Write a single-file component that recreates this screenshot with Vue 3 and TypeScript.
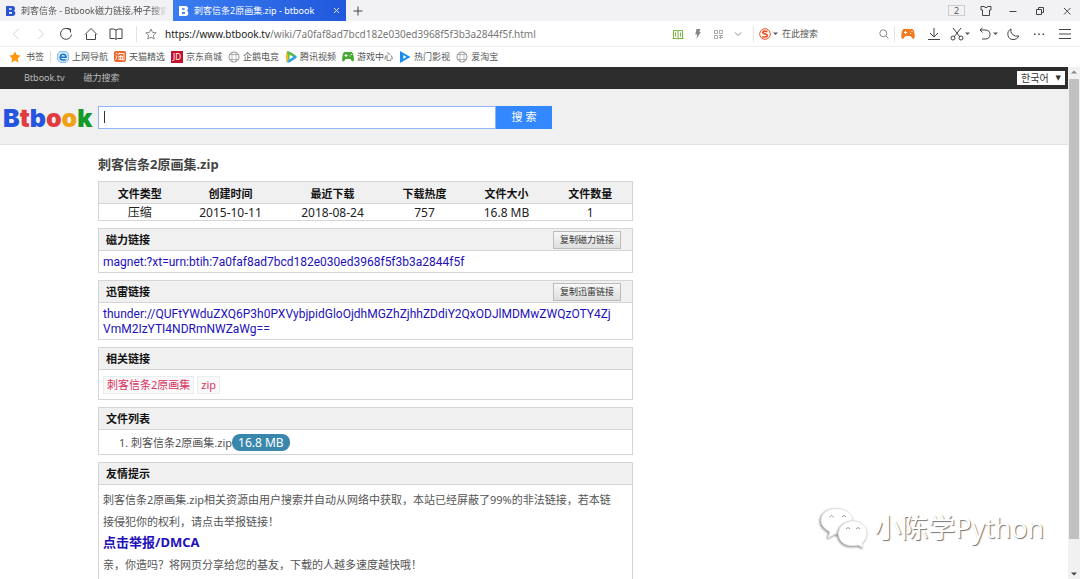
<script setup lang="ts">
import { ref } from 'vue'

interface Bookmark { label: string; icon: string }
interface Column { title: string; value: string; cls: string }

const bookmarks: Bookmark[] = [
  { label: '上网导航', icon: 'browser' },
  { label: '天猫精选', icon: 'tao' },
  { label: '京东商城', icon: 'jd' },
  { label: '企鹅电竞', icon: 'globe' },
  { label: '腾讯视频', icon: 'video' },
  { label: '游戏中心', icon: 'game' },
  { label: '热门影视', icon: 'play' },
  { label: '爱淘宝', icon: 'globe' },
]

const columns: Column[] = [
  { title: '文件类型', value: '压缩', cls: 'c82' },
  { title: '创建时间', value: '2015-10-11', cls: 'c100' },
  { title: '最近下载', value: '2018-08-24', cls: 'c104' },
  { title: '下载热度', value: '757', cls: 'c80' },
  { title: '文件大小', value: '16.8 MB', cls: 'c84' },
  { title: '文件数量', value: '1', cls: 'c84' },
]

const query = ref('')
const webQuery = ref('')
const magnet = 'magnet:?xt=urn:btih:7a0faf8ad7bcd182e030ed3968f5f3b3a2844f5f'
const thunder = 'thunder://QUFtYWduZXQ6P3h0PXVybjpidGloOjdhMGZhZjhhZDdiY2QxODJlMDMwZWQzOTY4ZjVmM2IzYTI4NDRmNWZaWg=='
</script>

<template>
  <div class="browser">
    <header class="tabs">
      <button class="tab first">
        <svg class="i10" viewBox="0 0 10 10"><path fill="#2b55d4" fill-rule="evenodd" d="M0 0h6.5c3 0 3.2 3.8 1.2 4.8C10.500 6 9.500 10 6.500 10H0zM3 2.200v1.600h2.600v-1.600zM3 6v1.800h3V6z" /></svg>
        <span class="tab-text fade">刺客信条 - Btbook磁力链接,种子搜索</span>
      </button>
      <button class="tab active">
        <svg class="i10" viewBox="0 0 10 10"><path fill="#fff" fill-rule="evenodd" d="M0 0h6.500c3 0 3.200 3.800 1.200 4.800C10.500 6 9.500 10 6.500 10H0zM3 2.200v1.600h2.600v-1.600zM3 6v1.800h3V6z" /></svg>
        <span class="tab-text">刺客信条2原画集.zip - btbook</span>
        <svg class="i7 line white" viewBox="0 0 7 7"><path d="M1 1l5 5M6 1L1 6" /></svg>
      </button>
      <button class="new-tab" aria-label="New tab"><svg class="i10 line dark" viewBox="0 0 10 10"><path d="M5 .5v9M.5 5h9" /></svg></button>
      <div class="window-tools">
        <span class="count">2</span>
        <svg class="i12 line dark" viewBox="0 0 12 12"><path d="M1 1.500h3Q6 4 8 1.500h3V5H9.500v5.500h-7V5H1z" /></svg>
        <svg class="i12 line dark" viewBox="0 0 12 12"><path d="M2.500 6.500h7" /></svg>
        <svg class="i12 line dark" viewBox="0 0 12 12"><path d="M2.500 4.500h5v5h-5zM4.500 4.500v-2h5v5h-2" /></svg>
        <svg class="i12 line dark" viewBox="0 0 12 12"><path d="M3 3l6.500 6.500M9.500 3L3 9.500" /></svg>
      </div>
    </header>

    <div class="address">
      <nav class="nav-tools">
        <svg class="i16 line pale" viewBox="0 0 16 16"><path d="M10.500 3L5.500 8l5 5" /></svg>
        <svg class="i16 line pale" viewBox="0 0 16 16"><path d="M5.500 3l5 5-5 5" /></svg>
        <svg class="i16 line dark" viewBox="0 0 16 16"><path d="M12 4A5.500 5.500 0 1 0 13.500 8.500M9 2.500L12.500 3v3.500" /></svg>
        <svg class="i16 line dark" viewBox="0 0 16 16"><path d="M2 8.500L8 2.500l6 6M3.500 8v5.500h9V8" /></svg>
        <svg class="i16 line dark" viewBox="0 0 16 16"><path d="M8 4Q6 2.500 2 3v9.500h4.500L8 13.500l1.500-1H14V3Q10 2.500 8 4zV13" /></svg>
      </nav>
      <div class="url">
        <svg class="i12 line grey" viewBox="0 0 12 12"><path d="M6 1l1.500 3.400 3.700.4-2.800 2.500.8 3.700L6 9.200 2.800 11l.8-3.700L.8 4.800l3.700-.4z" /></svg>
        <span class="url-text"><b>https://www.btbook.tv</b>/wiki/7a0faf8ad7bcd182e030ed3968f5f3b3a2844f5f.html</span>
      </div>
      <div class="url-tools">
        <svg class="i12 line green" viewBox="0 0 12 12"><path d="M6 2.500v8.500M.5 10.500h4.500l1 .5 1-.5h4.500M1.500 10.500v-8H5l1 .6 1-.6h3.500v8M3.500 4.500v4M8.500 4.500v4" /></svg>
        <svg class="i12" viewBox="0 0 12 12"><path fill="#888" d="M4.500 1H8.500L7.300 4h1.500L4.500 11l.7-4.500H3.200z" /></svg>
        <svg class="i12" viewBox="0 0 12 12"><path fill="none" stroke="#aaa" d="M2.500 2.500h3v3h-3zM7.500 2.500h3v3h-3zM2.500 7.500h3v3h-3zM7 7.500h4M7 9.500h4M8.500 7v4" /></svg>
        <svg class="i12 line grey" viewBox="0 0 12 12"><path d="M3 4.500l3 3 3-3" /></svg>
      </div>
      <form class="web-search" @submit.prevent>
        <svg class="i12" viewBox="0 0 12 12"><circle cx="6" cy="6" r="5.300" fill="none" stroke="#f05022" /><path fill="none" stroke="#f05022" stroke-width="1.700" d="M8.500 3.600Q4 2.300 3.800 4.500c0 1.800 4.500.8 4.500 2.900S5 9.200 3.300 8.400" /></svg>
        <svg class="i5" viewBox="0 0 5 5"><path fill="#555" d="M0 1.500h5L2.500 4z" /></svg>
        <input v-model="webQuery" aria-label="在此搜索" placeholder="在此搜索" />
        <svg class="i10 line grey" viewBox="0 0 10 10"><circle cx="4.300" cy="4.300" r="3.500" /><path d="M7 7l2.500 2.500" /></svg>
      </form>
      <div class="menu-tools">
        <svg class="i14" viewBox="0 0 14 14"><path fill="#f47a20" d="M3 2h8q2 0 2.500 4.500.7 5.500-1 5.500-1 0-3-3h-5q-2 3-3 3-1.700 0-1-5.500Q1 2 3 2z" /><path stroke="#fff" d="M3 5.500h3M4.500 4v3M9 6.500h1M10.500 4.500h1" /></svg>
        <svg class="i14 line dark" viewBox="0 0 14 14"><path d="M7 1v8.500M3 6l4 4 4-4M1 12.500h12" /></svg>
        <span class="pair cut">
          <svg class="i14 line dark" viewBox="0 0 14 14"><path d="M3 1l7 9M11 1L4 10" /><circle cx="3" cy="11" r="2" /><circle cx="11" cy="11" r="2" /></svg>
          <svg class="i5" viewBox="0 0 5 5"><path fill="#555" d="M0 1.500h5L2.500 4z" /></svg>
        </span>
        <span class="pair">
          <svg class="i14 line dark" viewBox="0 0 14 14"><path d="M4.500 1L2 3l2.500 2.500M2 3h5q5 0 5 4.500T7 12H4" /></svg>
          <svg class="i5" viewBox="0 0 5 5"><path fill="#555" d="M0 1.500h5L2.500 4z" /></svg>
        </span>
        <svg class="i14 line dark" viewBox="0 0 14 14"><path d="M5 2Q1 4 2 8.500t6 4q3 0 5-3.500-4 1-6.500-1.500T5 2z" /></svg>
        <svg class="i14" viewBox="0 0 14 14"><path fill="#444" d="M2 6.500h1.500V8H2zM6.300 6.500h1.500V8H6.300zM10.500 6.500H12V8h-1.500z" /></svg>
        <svg class="i14 line dark" viewBox="0 0 14 14"><path d="M1 2.500h12M1 7h12M1 11.500h12" /></svg>
      </div>
    </div>

    <nav class="bookmarks">
      <a href="#" class="bookmark star">
        <svg class="i12" viewBox="0 0 12 12"><path fill="#ff970f" d="M6 .3l1.800 3.800 4 .5-3 2.900.8 4.200L6 9.600l-3.600 2.100.8-4.200-3-2.900 4-.5z" /></svg>
        <span>书签</span>
      </a>
      <a v-for="b in bookmarks" :key="b.label" href="#" class="bookmark">
        <svg class="i12" viewBox="0 0 12 12">
          <g v-if="b.icon === 'browser'" fill="none">
            <path fill="#dff0fb" stroke="#6fb2e2" d="M2.500.7h7L11.300 3v6L9 11.300H3L.7 9V3z" />
            <path stroke="#1673c8" stroke-width="1.500" d="M3 6.200h6Q9 3.200 6.200 3.200T3.200 6.200 6.200 9 8.700 8.200" />
          </g>
          <g v-else-if="b.icon === 'tao'">
            <rect width="12" height="11" rx="2" fill="#ee6630" />
            <path fill="none" stroke="#fff" stroke-width=".9" d="M2 2l1.500 1M1.500 4.500L3 5.500 1.500 9M5.500 1.500L4.500 4M5 2.500h5v6.500H8.500M4.500 5.500h4.500M6.700 4v4.500M5 6.500v2h3.500v-2" />
          </g>
          <g v-else-if="b.icon === 'jd'">
            <rect width="12" height="12" fill="#c4122c" />
            <text class="jd" x="6" y="9" text-anchor="middle">JD</text>
          </g>
          <g v-else-if="b.icon === 'globe'" fill="none" stroke="#777" stroke-width=".8">
            <circle cx="6" cy="6" r="5" />
            <path d="M4 1.500v9M8 1.500v9M1.300 3.500h9.400M1.300 8.500h9.400" stroke-width=".5" />
          </g>
          <g v-else-if="b.icon === 'video'">
            <path fill="#2ba5e8" d="M2 .5Q4 0 6 1.500l5 3.300q1.500 1.200 0 2.400L4.500 11.500Q2 12 1.500 10z" />
            <path fill="#f6b824" d="M1.500 1Q.3 6 1.500 11l2-1.500V2z" />
            <path fill="#62be3c" d="M2 .5Q4 0 6 1.500l4 2.700-6 4z" />
            <path fill="#fff" d="M4.500 3.700L8.300 6 4.500 8.300z" />
          </g>
          <g v-else-if="b.icon === 'game'">
            <path fill="#45a932" d="M3 1h6q2 0 2.500 4 1 5.500-.5 5.500T8.500 8h-5Q2.500 10.500 1 10.500T.5 5Q1 1 3 1z" />
            <path stroke="#fff" d="M2.500 4.500h3M4 3v3M7.500 5h1M9 3.500h1" />
          </g>
          <g v-else>
            <path fill="#188df0" d="M1 0l10.500 6L1 12z" />
            <path fill="#fff" d="M4.300 4L7.500 6 4.300 8z" />
          </g>
        </svg>
        <span>{{ b.label }}</span>
      </a>
    </nav>

    <div class="viewport">
      <main class="page">
        <nav class="topbar">
          <a href="#">Btbook.tv</a>
          <a href="#">磁力搜索</a>
          <label class="lang">
            <select aria-label="Language"><option>한국어</option></select>
            <span class="arrow">▼</span>
          </label>
        </nav>
        <form class="search" @submit.prevent>
          <a href="#" class="logo"><span class="blue">B</span><span class="red">t</span><span class="blue">b</span><span class="red">o</span><span class="gold">o</span><span class="leaf">k</span></a>
          <input v-model="query" aria-label="搜索" />
          <button>搜 索</button>
        </form>

        <article class="content">
          <h1>刺客信条2原画集.zip</h1>
          <table>
            <thead><tr><th v-for="c in columns" :key="c.title" :class="c.cls">{{ c.title }}</th></tr></thead>
            <tbody><tr><td v-for="c in columns" :key="c.title">{{ c.value }}</td></tr></tbody>
          </table>

          <section>
            <h2>磁力链接<button>复制磁力链接</button></h2>
            <div class="link"><a href="#">{{ magnet }}</a></div>
          </section>
          <section>
            <h2>迅雷链接<button>复制迅雷链接</button></h2>
            <div class="link tall"><a href="#">{{ thunder }}</a></div>
          </section>
          <section>
            <h2>相关链接</h2>
            <div class="tags"><a href="#">刺客信条2原画集</a><a href="#">zip</a></div>
          </section>
          <section>
            <h2>文件列表</h2>
            <ol><li>刺客信条2原画集.zip<span class="size">16.8 MB</span></li></ol>
          </section>
          <section>
            <h2>友情提示</h2>
            <div class="tips">
              <p>刺客信条2原画集.zip相关资源由用户搜索并自动从网络中获取，本站已经屏蔽了99%的非法链接，若本链<br />接侵犯你的权利，请点击举报链接！</p>
              <a href="#">点击举报/DMCA</a>
              <p>亲，你造吗？将网页分享给您的基友，下载的人越多速度越快哦！</p>
            </div>
          </section>
        </article>
      </main>
      <div class="scrollbar">
        <svg class="i10" viewBox="0 0 10 10"><path fill="#888" d="M2 6.500h6L5 3.500z" /></svg>
        <div class="thumb"></div>
        <svg class="i10" viewBox="0 0 10 10"><path fill="#444" d="M2 3.500h6L5 6.500z" /></svg>
      </div>
    </div>

    <div class="watermark">
      <svg viewBox="0 0 50 42">
        <path d="M9 31l2-6Q2 20 2 13.500C2 6 9 1.500 18 1.500S34 7 34 14L22 27.300q-3 .4-6-.3z" />
        <path d="M34 14c8 0 14 5.500 14 12.500 0 4-2 7-5 9.500l1 4.500-5-2.500q-3 .8-6 .7c-8 0-13.500-5-13.500-12S26 14 34 14z" />
        <path class="eye" d="M10.500 10q2-3 4 0M23 10q2-3 4 0M27 22q2-3 4 0M37 22q2-3 4 0" />
      </svg>
      <span>小陈学Python</span>
    </div>
  </div>
</template>

<style>
html, body { margin: 0; overflow: hidden; }
</style>

<style scoped>
.browser {
  position: relative;
  display: flex;
  flex-direction: column;
  height: 100vh;
  overflow: hidden;
  background: #fff;
  color: #555;
  font: 9px/12px "Noto Sans", "Noto Sans CJK SC", sans-serif;
}
* { box-sizing: border-box; }
a { color: inherit; text-decoration: none; }
button, input, select { margin: 0; padding: 0; border: 0; font: inherit; color: inherit; background: none; outline: 0; }
svg { display: block; flex: none; }
.i5 { width: 5px; height: 5px; }
.i7 { width: 7px; height: 7px; }
.i10 { width: 10px; height: 10px; }
.i12 { width: 12px; height: 12px; }
.i14 { width: 14px; height: 14px; }
.i16 { width: 16px; height: 16px; }
.line { fill: none; stroke-width: 1; }
.dark { stroke: #444; }
.grey { stroke: #888; }
.pale { stroke: #d4d4d4; }
.green { stroke: #78b83c; }
.white { stroke: #dce6ff; }

.tabs { display: flex; flex: none; height: 21px; background: #f2f2f4; }
.tab { display: flex; align-items: center; gap: 5px; width: 173px; padding: 0 6px; text-align: left; }
.first { padding-right: 0; }
.tab-text { flex: 1; white-space: nowrap; }
.fade { mask-image: linear-gradient(90deg, #000 86%, transparent 96%); }
.active { color: #fff; background: linear-gradient(90deg, #3a7df0, #2158dc); }
.new-tab { display: flex; align-items: center; padding: 0 7px; }
.window-tools { display: flex; align-items: center; gap: 15px; margin-left: auto; padding-right: 7px; }
.count { width: 17px; height: 11px; border: 1px solid #ccc; line-height: 10px; text-align: center; }

.address { display: flex; align-items: center; flex: none; height: 26px; border-bottom: 1px solid #eee; }
.nav-tools { display: flex; gap: 9px; padding: 0 12px 0 8px; border-right: 1px solid #e4e4e4; }
.url { display: flex; align-items: center; flex: 1; gap: 8px; padding-left: 8px; }
.url-text { font-size: 10px; line-height: 16px; white-space: nowrap; color: #777; }
.url-text b { font-weight: 400; color: #222; }
.url-tools { display: flex; gap: 8px; padding-right: 9px; }
.web-search { display: flex; align-items: center; gap: 2px; width: 142px; height: 16px; padding: 0 5px; border: solid #e4e4e4; border-width: 0 1px; }
.web-search input { flex: 1; width: 0; padding-left: 2px; }
.web-search input::placeholder { color: #555; opacity: 1; }
.menu-tools { display: flex; align-items: center; gap: 12px; padding: 0 8px 0 6px; }
.pair { display: flex; align-items: center; gap: 1px; margin-right: -4px; }
.cut { margin-left: -3px; }

.bookmarks { display: flex; align-items: center; flex: none; gap: 6px; height: 20px; padding-left: 9px; white-space: nowrap; }
.bookmark { display: flex; align-items: center; gap: 3px; }
.star { gap: 5px; padding-right: 6px; border-right: 1px solid #ddd; }
.jd { fill: #fff; font: 8px "Noto Sans", sans-serif; }

.viewport { display: flex; flex: 1; min-height: 0; }
.page { flex: 1; min-width: 0; overflow: hidden; }
.topbar { display: flex; align-items: center; gap: 19px; height: 22px; padding: 0 3px 0 24px; background: #2d2d2d; color: #bbb; }
.lang { position: relative; width: 48px; height: 14px; margin-left: auto; background: #fff; color: #333; }
.lang select { width: 100%; height: 14px; padding-left: 4px; appearance: none; font-family: "Noto Sans CJK KR", sans-serif; font-size: 10px; }
.arrow { position: absolute; top: 1px; right: 4px; font: 7px/12px "DejaVu Sans", sans-serif; pointer-events: none; }
.search { display: flex; align-items: center; height: 56px; padding-top: 1px; border-bottom: 1px solid #e2e2e2; background: #f0f0f0; }
.logo { flex: none; width: 98px; padding: 2px 0 0 3px; font: 900 25px/30px Inter, sans-serif; }
.blue { color: #2455e0; }
.red { color: #e03c40; }
.gold { color: #f0a010; }
.leaf { color: #159a28; }
.search input { width: 398px; height: 23px; padding: 0 5px; border: 1px solid #8fb6f4; background: linear-gradient(#333, #333) 5px 4px / 1px 12px no-repeat #fff; caret-color: transparent; font-size: 12px; }
.search button { width: 56px; height: 23px; background: #3388ff; color: #fff; font-size: 11px; }

.content { width: 535px; margin-left: 98px; color: #555; font-size: 11px; }
h1 { margin: 0; padding: 10px 0 8px; color: #444; font-size: 13px; line-height: 18px; }
table { width: 100%; border: 1px solid #d5d5d5; border-collapse: collapse; table-layout: fixed; color: #222; text-align: center; }
th, td { padding: 0; }
th { height: 22px; padding-top: 2px; border-bottom: 1px solid #d5d5d5; background: #f0f0f0; color: #111; font-size: 11px; }
td { height: 17px; padding-top: 1px; font-size: 12px; line-height: 15px; }
.c80 { width: 80px; }
.c82 { width: 82px; }
.c84 { width: 84px; }
.c100 { width: 100px; }
.c104 { width: 104px; }
section { margin-top: 7px; border: 1px solid #d5d5d5; }
h2 { display: flex; align-items: center; justify-content: space-between; height: 22px; margin: 0; padding: 1px 11px 0 7px; border-bottom: 1px solid #d5d5d5; background: #f0f0f0; color: #111; font-size: 11px; line-height: 20px; }
h2 button { width: 68px; height: 18px; border: 1px solid #bbb; background: linear-gradient(#f8f8f8, #dedede); color: #333; font-size: 9px; font-weight: 400; line-height: 16px; }
.link { height: 21px; padding: 4px 16px 0 4px; color: #2210ba; font: 12px/15px Roboto, sans-serif; word-break: break-all; }
.tall { height: 36px; }
.tags { display: flex; gap: 3px; padding: 6px 4px 5px; color: #d8345f; }
.tags a { height: 18px; padding: 0 3px; border: 1px solid #e8eef0; background: #f9f9fa; line-height: 16px; }
ol { margin: 0; padding: 5px 0 3px 32px; line-height: 16px; }
.size { padding: 0 6px; border-radius: 8px; background: #3a87ad; color: #fff; font-size: 12px; line-height: 15px; }
.tips { padding: 4px; line-height: 22px; }
.tips p { margin: 0; }
.tips a { display: block; margin-bottom: 3px; color: #2210ba; font-size: 13px; font-weight: 700; line-height: 18px; }

.scrollbar { display: flex; flex-direction: column; align-items: center; flex: none; width: 12px; background: #f1f1f1; }
.thumb { width: 10px; flex: 1; margin: 2px 0 30px; background: #c1c1c1; }

.watermark { position: absolute; right: 36px; bottom: 30px; display: flex; align-items: center; gap: 5px; color: #fff; font: 27px/40px "Open Sans", "Noto Sans CJK SC", sans-serif; text-shadow: 1px 1px 1px #777; }
.watermark svg { width: 50px; height: 42px; overflow: visible; fill: #fff; stroke: #e4e4e4; stroke-width: 1; }
.watermark path { filter: drop-shadow(-1px 1px 1px #888); }
.watermark .eye { fill: none; stroke: #999; filter: none; }
</style>
